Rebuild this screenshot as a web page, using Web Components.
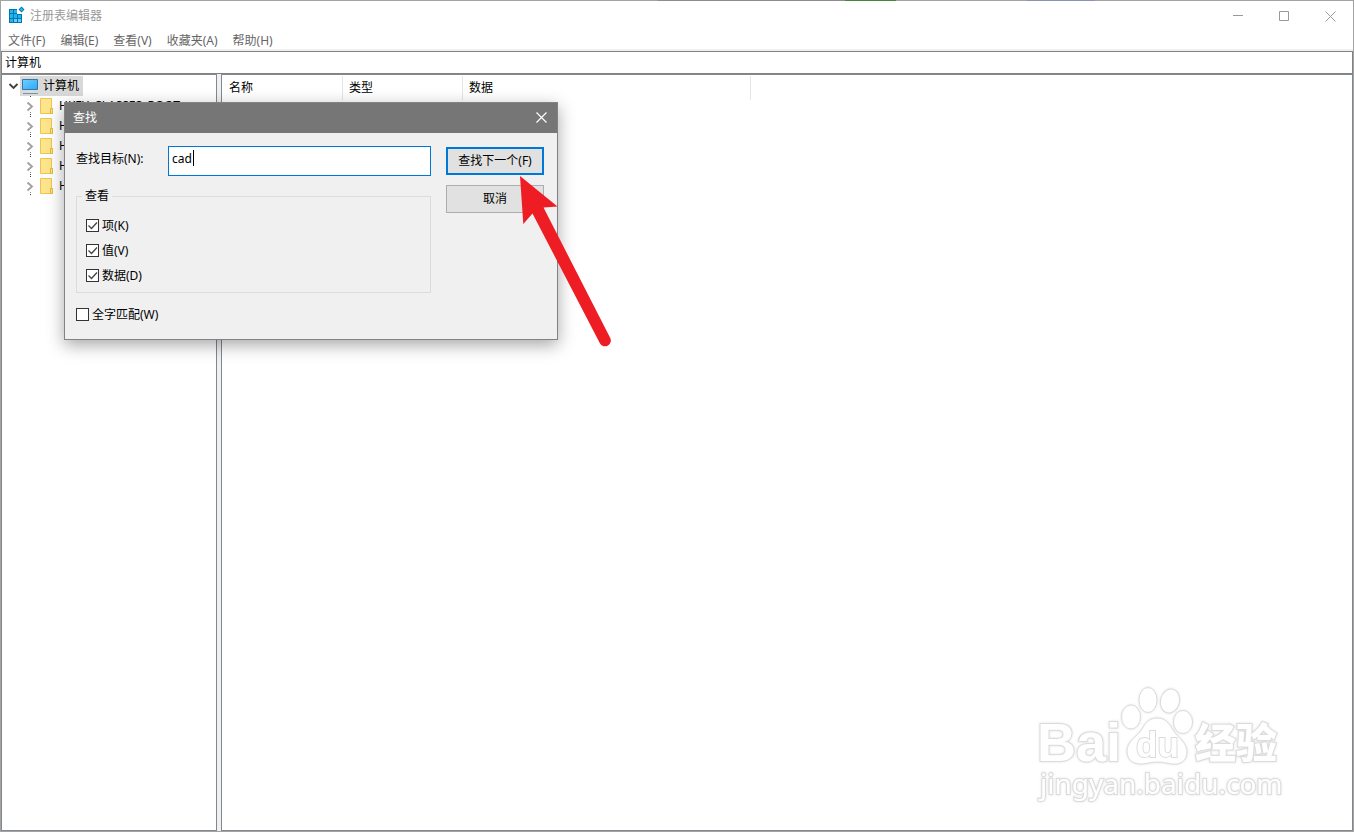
<!DOCTYPE html>
<html lang="zh-CN">
<head>
<meta charset="utf-8">
<title>注册表编辑器</title>
<style>
html,body{margin:0;height:100%}
body{font:12px/20px "Noto Sans","Noto Sans CJK SC",sans-serif;color:#000;background:#fff;overflow:hidden}
</style>
</head>
<body>
<registry-window></registry-window>

<script>
const define = (name, html) => {
  const template = document.createElement('template');
  template.innerHTML = '<style>:host,*{box-sizing:border-box}button,input{font:inherit;color:inherit}</style>' + html;
  customElements.define(name, class extends HTMLElement {
    constructor() {
      super();
      this.attachShadow({ mode: 'open' }).append(template.content.cloneNode(true));
    }
  });
};

define('title-bar', `
<style>
:host{display:flex;height:30px;flex:none;color:#999;align-items:center;padding-left:7px;position:relative}
h1{font:inherit;margin:0;flex:1}
.logo{margin-right:5px;margin-bottom:2px}
button{border:0;background:none;padding:0;width:46px;height:28px;display:grid;place-items:center}
.edge{position:absolute;left:0;right:0;top:-1px;height:1px;display:grid;grid-template-columns:657fr 187fr 51fr 131fr 68fr 258fr}
.edge i:nth-child(2){background:#8d8d8d}.edge i:nth-child(3){background:#43853f}.edge i:nth-child(5){background:#8a94b0}
</style>
<div class="edge" aria-hidden="true"><i></i><i></i><i></i><i></i><i></i><i></i></div>
<svg class="logo" width="17" height="18" viewBox="0 0 17 18" aria-hidden="true">
  <path d="M1 3h8v5h5v9H1z" fill="#0675ae"/>
  <path d="M2 4h3v3H2zM6 4h3v3H6zM2 8h3v4H2zM6 8h3v4H6zM10 9h3v3h-3zM2 13h3v3H2z" fill="#20b5ee"/>
  <path d="M6 13h3v3H6zM10 13h3v3h-3z" fill="#55d3ff"/>
  <path d="M13.500 .5l3 3-3 3-3-3z" fill="#0877b0"/><path d="M13.500 2l1.500 1.500-1.500 1.500-1.500-1.500z" fill="#39c4f3"/>
</svg>
<h1><slot></slot></h1>
<button aria-label="最小化"><svg width="10" height="10"><path d="M0 4.500h10" stroke="#999"/></svg></button>
<button aria-label="最大化"><svg width="10" height="10"><path d="M.5.5h9v9h-9z" fill="none" stroke="#999"/></svg></button>
<button aria-label="关闭"><svg width="11" height="11"><path d="M.5.5l10 10M10.500.5l-10 10" stroke="#999"/></svg></button>
`);

define('menu-bar', `
<style>
:host{display:flex;flex:none;height:20px;gap:15px;padding-left:7px;color:#666;border-bottom:2px solid #f0f0f0}
button{border:0;background:none;padding:0;line-height:20px;height:20px;white-space:nowrap}
</style>
<button>文件(F)</button><button>编辑(E)</button><button>查看(V)</button><button>收藏夹(A)</button><button>帮助(H)</button>
`);

define('address-bar', `
<style>
:host{display:block;flex:none}
input{display:block;width:100%;height:23px;border:1px solid #828282;padding:0 0 2px 3px;outline:0;background:#fff;border-radius:0}
</style>
<input aria-label="地址" value="计算机">
`);

define('tree-key', `
<style>
:host{display:flex;height:20px;align-items:center;white-space:nowrap}
.icon{margin:0 6px 0 1px}
</style>
<svg width="18" height="20" viewBox="0 0 18 20" aria-hidden="true">
  <path d="M9 0h1v1H9zM9 18h1v1H9z" fill="#444"/>
  <path d="M9 16h1v1H9z" fill="#888"/>
  <path d="M6.500 6.500l4.500 4-4.500 4" fill="none" stroke="#a0a0a0" stroke-width="1.800"/>
</svg>
<svg class="icon" width="13" height="16" viewBox="0 0 13 16" aria-hidden="true">
  <path d="M.5.5h11v10h1v5H.5z" fill="#ffe48e" stroke="#edc64b"/><path d="M10.500 15.500v-5h2v5z" fill="#ffe48e" stroke="#e3b738"/>
</svg>
<slot></slot>
`);

define('key-tree', `
<style>
:host{display:block;background:#fff;border:1px solid #828790;overflow:hidden;padding-top:1px}
ul{list-style:none;margin:0;padding:0}
ul ul{padding-left:19px}
.root{display:flex;height:20px;align-items:center}
.sel{display:flex;align-items:center;height:20px;background:#d9d9d9;padding:0 4px 0 2px;gap:4px}
</style>
<ul>
 <li><div class="root">
  <svg width="18" height="20" aria-hidden="true"><path d="M7.500 8l4 4 4-4" fill="none" stroke="#404040" stroke-width="1.800"/></svg>
  <span class="sel"><svg width="17" height="16" viewBox="0 0 17 16" aria-hidden="true">
   <defs><linearGradient id="g" x2="1" y2="1"><stop stop-color="#72cfff"/><stop offset="1" stop-color="#29a9f7"/></linearGradient></defs>
   <path d="M.5 1.500h15v10H.5z" fill="url(#g)" stroke="#3679a5"/><path d="M4 13.500h8" stroke="#d5e1e8"/><path d="M1 15.500h15" stroke="#7893a5"/></svg>计算机</span></div>
  <ul>
   <li><tree-key>HKEY_CLASSES_ROOT</tree-key></li>
   <li><tree-key>H</tree-key></li>
   <li><tree-key>H</tree-key></li>
   <li><tree-key>H</tree-key></li>
   <li><tree-key>H</tree-key></li>
  </ul>
 </li>
</ul>
`);

define('value-list', `
<style>
:host{display:block;background:#fff;border:1px solid #828790;padding-top:1px}
table{border-collapse:separate;border-spacing:0;table-layout:fixed;width:529px}
th{height:24px;padding:0 6px;text-align:left;font-weight:400;border-right:1px solid #e5e5e5}
th:first-child{padding-left:7px}
col{width:120px}col:first-child{width:121px}col:last-child{width:288px}
</style>
<table><colgroup><col><col><col></colgroup><thead><tr><th scope="col">名称</th><th scope="col">类型</th><th scope="col">数据</th></tr></thead></table>
`);

define('check-option', `
<style>
:host{display:block;height:25px}
label{display:flex;align-items:center;gap:3px;height:25px}
input{appearance:none;width:13px;height:13px;margin:0;border:1px solid #333;background:#fff}
.box{display:grid}
.box>*{grid-area:1/1}
svg{visibility:hidden;pointer-events:none}
input:checked+svg{visibility:visible}
</style>
<label><span class="box"><input type="checkbox"><svg width="13" height="13" aria-hidden="true"><path d="M2.500 6.500l3 3 5.500-6" fill="none" stroke="#444" stroke-width="1.300"/></svg></span><slot></slot></label>
`);

define('find-dialog', `
<style>
:host{display:block;width:494px;border:1px solid #828282;background:#f0f0f0;box-shadow:0 5px 16px rgba(0,0,0,.35)}
header{display:flex;align-items:center;height:30px;background:#767676;color:#fff;padding:0 0 0 8px}
h2{font:inherit;margin:0;flex:1}
header button{width:31px;height:30px;border:0;padding:0 0 2px;background:none;display:grid;place-items:center}
form{display:grid;grid-template-columns:355px 98px;column-gap:15px;padding:13px 11px 12px;margin:0}
.target{display:flex;height:30px}
.target label{width:92px;line-height:26px}
.field{position:relative;flex:1}
.field input{width:100%;height:30px;border:1px solid #0078d7;border-radius:0;padding:0 3px 6px;outline:0;background:#fff;display:block}
.caret{position:absolute;left:25px;top:4px;width:1px;height:16px;background:#000}
fieldset{margin:10px 0 0;height:107px;border:1px solid #dcdcdc;padding:7px 9px 0;min-width:0}
legend{padding:0 3px;margin-left:-4px;line-height:20px}
.actions{display:flex;flex-direction:column;gap:10px;padding-top:1px}
.actions button{height:28px;border:1px solid #adadad;background:#e1e1e1;border-radius:0;padding:0;white-space:nowrap}
.actions .primary{border:2px solid #0078d7}
.whole{margin-top:9px}
</style>
<header><h2>查找</h2><button aria-label="关闭"><svg width="11" height="11"><path d="M.5.5l10 10M10.500.5l-10 10" stroke="#fff" stroke-width="1.200"/></svg></button></header>
<form onsubmit="return false">
 <div>
  <div class="target"><label for="q">查找目标(N):</label><div class="field"><input id="q" value="cad"><i class="caret"></i></div></div>
  <fieldset><legend>查看</legend>
   <check-option checked>项(K)</check-option><check-option checked>值(V)</check-option><check-option checked>数据(D)</check-option>
  </fieldset>
  <check-option class="whole">全字匹配(W)</check-option>
 </div>
 <div class="actions"><button class="primary" type="submit">查找下一个(F)</button><button type="button">取消</button></div>
</form>
`);

define('pointer-arrow', `
<style>:host{display:block;pointer-events:none}svg{display:block}</style>
<svg width="94" height="174" viewBox="518 174 94 174" aria-hidden="true"><path d="M520 176L557.500 206.500 543.500 207.500 610 337.500A5.800 5.800 0 0 1 600 343.500L532.500 213.500 523.300 224Z" fill="#ee1c23"/></svg>
`);

define('baidu-mark', `
<style>
:host{display:block;pointer-events:none}
svg{display:block;filter:drop-shadow(0 0 1px #ddd)}
text,.p{fill:#fff;stroke:#dcdcdc;stroke-width:1px}
text{paint-order:stroke;stroke-width:2px}
.b{font:bold 54px "Liberation Sans",sans-serif}
.d{font:bold 35px "Liberation Sans",sans-serif}
.c{font:900 41px "Noto Sans CJK SC",sans-serif}
.u{font:28px "Noto Sans",sans-serif}
</style>
<svg width="260" height="130" viewBox="1030 680 260 130">
 <text class="b" x="1037" y="761">Bai</text>
 <g class="p"><ellipse cx="1131" cy="717" rx="9.500" ry="12"/><ellipse cx="1148" cy="700" rx="9" ry="12.500"/><ellipse cx="1170" cy="701" rx="9.500" ry="12" transform="rotate(12 1170 701)"/><ellipse cx="1183" cy="722" rx="9.500" ry="11.500"/>
 <path d="M1157 718c8 0 12 5 16 12s14 12 14 22c0 9-7 13-15 12-6-1-9-2-15-2s-10 2-16 2c-9 0-14-5-14-13 0-10 10-14 15-22 4-7 8-11 15-11z"/></g>
 <text class="d" x="1136" y="757">du</text>
 <text class="c" x="1195" y="758">经验</text>
 <text class="u" x="1040" y="794">jingyan.baidu.com</text>
</svg>
`);

define('registry-window', `
<style>
:host{display:flex;flex-direction:column;height:100vh;border:1px solid #a3a3a3;background:#fff;position:relative}
main{flex:1;min-height:0;display:grid;grid-template-columns:216px minmax(0,1fr);gap:4px;background:#f0f0f0}
find-dialog{position:absolute;left:63px;top:101px}
pointer-arrow{position:absolute;left:517px;top:173px}
baidu-mark{position:absolute;right:63px;bottom:21px}
</style>
<title-bar>注册表编辑器</title-bar>
<menu-bar></menu-bar>
<address-bar></address-bar>
<main><key-tree></key-tree><value-list></value-list></main>
<find-dialog></find-dialog>
<pointer-arrow></pointer-arrow>
<baidu-mark></baidu-mark>
`);

const setChecks = root => root.querySelectorAll('*').forEach(el => {
  if (el.localName === 'check-option') el.shadowRoot.querySelector('input').checked = el.hasAttribute('checked');
  if (el.shadowRoot) setChecks(el.shadowRoot);
});
setChecks(document);
</script>
</body>
</html>
